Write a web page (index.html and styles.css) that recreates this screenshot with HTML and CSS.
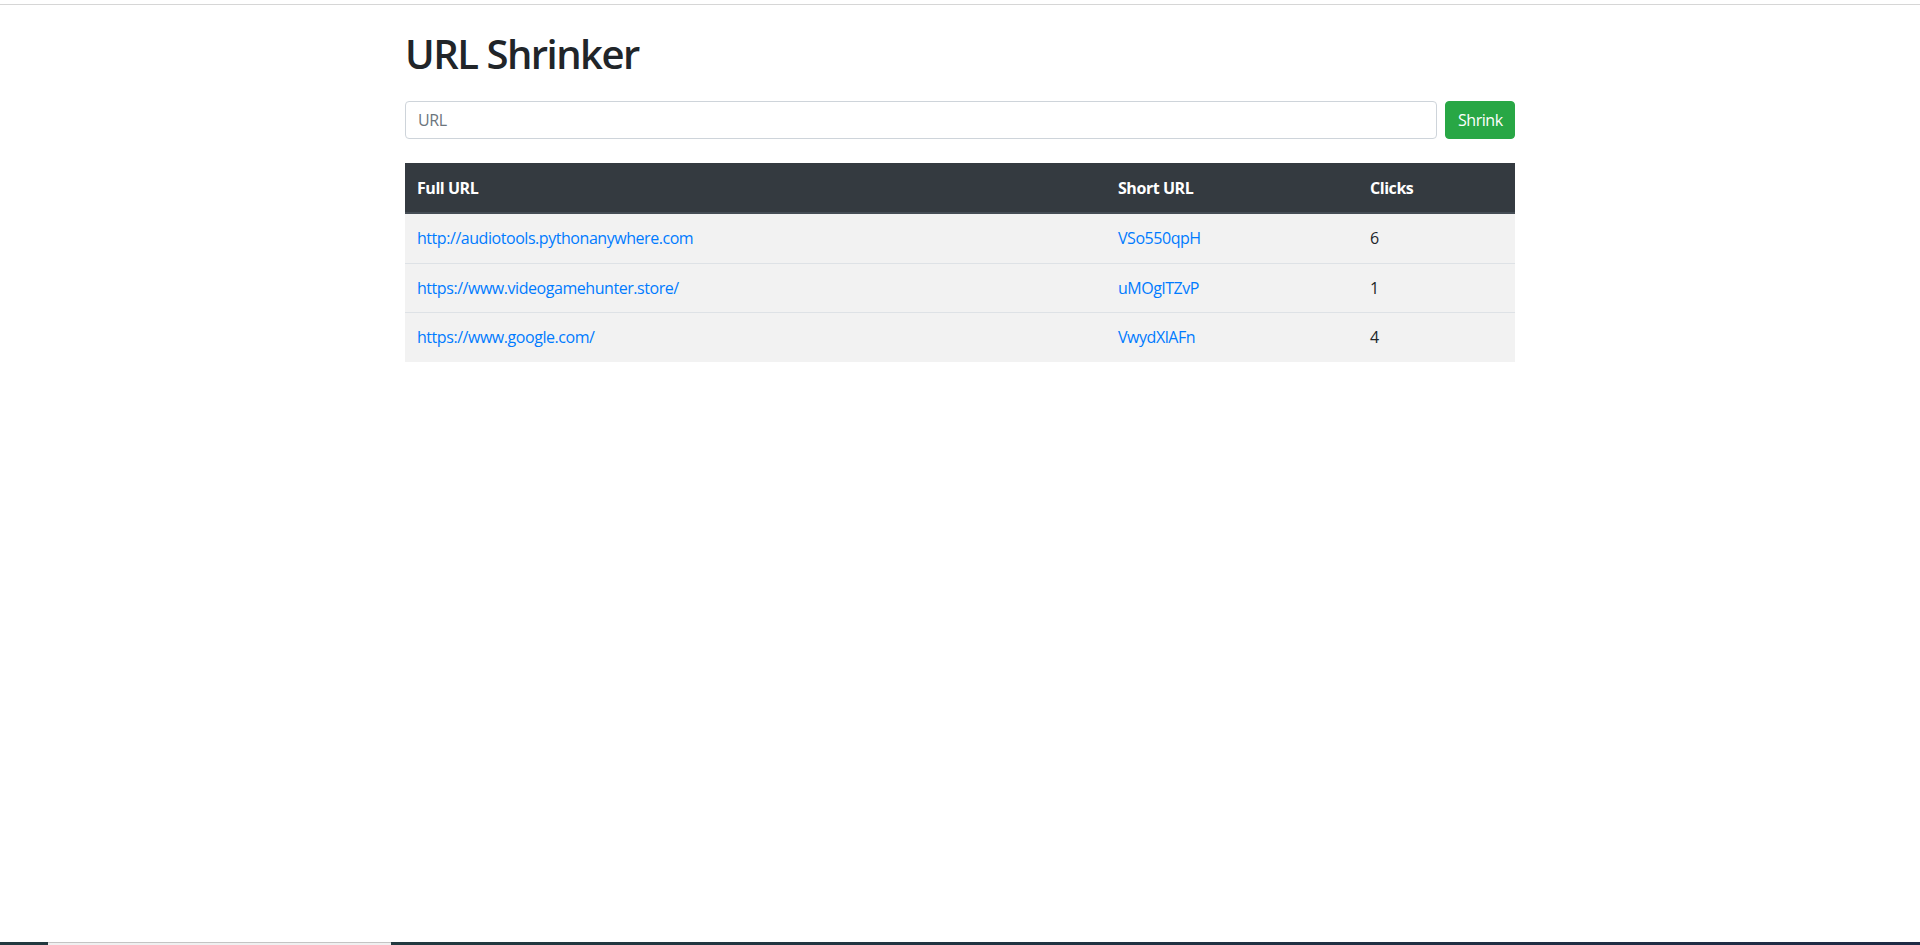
FILE: index.html
```html
<!DOCTYPE html>
<html lang="en">
<head>
<meta charset="utf-8">
<title>URL Shrinker</title>
<link rel="stylesheet" href="styles.css">
</head>
<body>
<div class="topline"></div>
<main class="container">
  <h1 class="title">URL Shrinker</h1>
  <form class="shrink-form">
    <input class="url-input" type="url" placeholder="URL">
    <button class="btn-shrink" type="button">Shrink</button>
  </form>
  <table class="url-table">
    <thead>
      <tr>
        <th class="col-full">Full URL</th>
        <th class="col-short">Short URL</th>
        <th class="col-clicks">Clicks</th>
      </tr>
    </thead>
    <tbody>
      <tr>
        <td><a href="#">http://audiotools.pythonanywhere.com</a></td>
        <td><a href="#">VSo550qpH</a></td>
        <td>6</td>
      </tr>
      <tr>
        <td><a href="#">https://www.videogamehunter.store/</a></td>
        <td><a href="#">uMOglTZvP</a></td>
        <td>1</td>
      </tr>
      <tr>
        <td><a href="#">https://www.google.com/</a></td>
        <td><a href="#">VwydXlAFn</a></td>
        <td>4</td>
      </tr>
    </tbody>
  </table>
</main>
<div class="bottombar">
  <div class="bb-start"></div>
  <div class="bb-light"></div>
  <div class="bb-rest"></div>
</div>
</body>
</html>
```

FILE: styles.css
```css
html, body {
  margin: 0;
  padding: 0;
}
body {
  font-family: "Open Sans", "Noto Sans", sans-serif;
  font-size: 16px;
  line-height: 1.5;
  letter-spacing: -0.45px;
  color: #212529;
  background: #fff;
  min-height: 100vh;
  display: flex;
  flex-direction: column;
}
.topline {
  height: 4px;
  border-bottom: 1px solid #d6d6d6;
  flex: none;
}
.container {
  width: 1110px;
  margin: 0 auto;
  padding-top: 25px;
  flex: 1 0 auto;
}
.title {
  margin: 0 0 23px 0;
  font-size: 40px;
  font-weight: 600;
  line-height: 48px;
  letter-spacing: -1.5px;
}
.shrink-form {
  display: flex;
  gap: 8px;
  margin: 0;
}
.url-input {
  flex: 1;
  height: 38px;
  box-sizing: border-box;
  padding: 6px 12px;
  border: 1px solid #ced4da;
  border-radius: 4px;
  font: inherit;
  letter-spacing: inherit;
  color: #495057;
  outline: none;
}
.url-input::placeholder {
  color: #6c757d;
}
.btn-shrink {
  width: 70px;
  height: 38px;
  box-sizing: border-box;
  border: 1px solid #28a745;
  background: #28a745;
  color: #fff;
  border-radius: 4px;
  font: inherit;
  letter-spacing: inherit;
  padding: 6px 12px;
  cursor: pointer;
}
.url-table {
  width: 100%;
  margin-top: 24px;
  border-collapse: collapse;
}
.url-table th,
.url-table td {
  padding: 12px 12px 12.5px;
  text-align: left;
  vertical-align: top;
  border-top: 1px solid #dee2e6;
}
.url-table thead th {
  padding-bottom: 12px;
  background: #343a40;
  color: #fff;
  font-weight: 700;
  border-top-color: #343a40;
  border-bottom: 2px solid #454d55;
}
.url-table tbody td {
  background: #f2f2f2;
}
.url-table tbody tr:first-child td {
  border-top: 0;
}
.col-full { width: 677px; }
.col-short { width: 228px; }
.col-clicks { width: 133px; }
.url-table a {
  color: #007bff;
  text-decoration: none;
}
.bottombar {
  flex: none;
  height: 3px;
  display: flex;
}
.bb-start {
  width: 48px;
  background: #22393f;
}
.bb-light {
  width: 343px;
  background: #f0f0f0;
  border-top: 1px solid #c4c4c4;
  box-sizing: border-box;
}
.bb-rest {
  flex: 1;
  background: linear-gradient(to right, #22393f, #1f2a45);
}
```
